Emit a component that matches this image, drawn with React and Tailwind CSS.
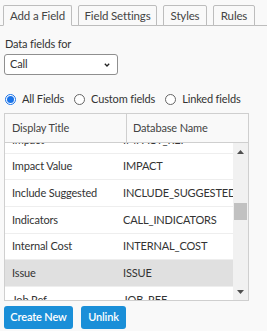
import React from 'react';

const TABS = [
  { label: 'Add a Field', w: 'w-[69px]', active: true },
  { label: 'Field Settings', w: 'w-[79px]' },
  { label: 'Styles', w: 'w-[44px]' },
  { label: 'Rules', w: 'w-[42px]' },
];

const ROWS = [
  ['Impact', 'IMPACT_REF'],
  ['Impact Value', 'IMPACT'],
  ['Include Suggested', 'INCLUDE_SUGGESTED'],
  ['Indicators', 'CALL_INDICATORS'],
  ['Internal Cost', 'INTERNAL_COST'],
  ['Issue', 'ISSUE', true],
  ['Job Ref', 'JOB_REF'],
];

function Radio({ checked, label }) {
  return (
    <label className="flex items-center gap-[6px]">
      <span
        className={`w-[11px] h-[11px] rounded-full border flex items-center justify-center bg-white ${
          checked ? 'border-[#1a73e8]' : 'border-[#666]'
        }`}
      >
        {checked && <span className="w-[7px] h-[7px] rounded-full bg-[#1a73e8]"></span>}
      </span>
      <span>{label}</span>
    </label>
  );
}

export default function App() {
  return (
    <div className="w-[267px] h-[331px] overflow-hidden bg-[#f9f9f9] text-[#333] text-[11px] tracking-[-0.15px] font-['Lato','Open_Sans',sans-serif]">
      {/* tabs */}
      <div className="flex items-end gap-[6px] pt-[5px] pl-[3px] border-b border-[#bdbdbd] h-[26px]">
        {TABS.map(t => (
          <div
            key={t.label}
            className={`${t.w} h-[21px] -mb-px flex items-center justify-center border border-[#bdbdbd] rounded-t-[2px] text-[11.5px] text-[#444] ${
              t.active ? 'border-b-[#f9f9f9] bg-[#f9f9f9]' : 'bg-[#f9f9f9]'
            }`}
          >
            {t.label}
          </div>
        ))}
      </div>

      <div className="px-[4px]">
        <div className="mt-[11px] pl-[1px] leading-[14px]">Data fields for</div>

        <div className="mt-[3px] w-[114px] h-[21px] bg-white border border-[#8f8f8f] rounded-[3px] flex items-center justify-between pl-[5px] pr-[7px]">
          <span>Call</span>
          <svg width="6" height="4" viewBox="0 0 6 4">
            <path d="M0.8 0.8 L3 3 L5.2 0.8" fill="none" stroke="#222" strokeWidth="1.3" />
          </svg>
        </div>

        <div className="mt-[18px] flex items-center gap-[10px] pl-[1px] h-[12px]">
          <Radio checked label="All Fields" />
          <Radio label="Custom fields" />
          <Radio label="Linked fields" />
        </div>

        {/* table */}
        <div className="mt-[8px] w-[245px] border border-[#cfcfcf] bg-white">
          <div className="flex h-[29px] border-b border-[#cfcfcf] bg-[#f9f9f9] text-[#444]">
            <div className="w-[122px] border-r border-[#cfcfcf] flex items-center pl-[7px]">Display Title</div>
            <div className="flex-1 flex items-center pl-[6px]">Database Name</div>
          </div>
          <div className="flex h-[157px]">
            <div className="flex-1 overflow-hidden">
              <div className="-mt-[16px]">
                {ROWS.map(([a, b, sel]) => (
                  <div
                    key={a}
                    className={`flex h-[26.67px] items-center border-b border-[#eeeeee] ${sel ? 'bg-[#e0e0e0]' : ''}`}
                  >
                    <div className="w-[110px] pl-[7px] whitespace-nowrap overflow-hidden">{a}</div>
                    <div className="flex-1 pl-[8px] whitespace-nowrap overflow-hidden">{b}</div>
                  </div>
                ))}
              </div>
            </div>
            {/* scrollbar */}
            <div className="w-[15px] bg-[#f1f1f1] flex flex-col items-center">
              <div className="h-[15px] flex items-center justify-center mt-[1px]">
                <svg width="7" height="4" viewBox="0 0 7 4"><path d="M0 4 L3.5 0 L7 4 Z" fill="#505050" /></svg>
              </div>
              <div className="mt-[44px] w-[13px] h-[17px] bg-[#c1c1c1]"></div>
              <div className="flex-1"></div>
              <div className="h-[15px] flex items-center justify-center mb-[1px]">
                <svg width="7" height="4" viewBox="0 0 7 4"><path d="M0 0 L3.5 4 L7 0 Z" fill="#505050" /></svg>
              </div>
            </div>
          </div>
        </div>

        <div className="mt-[5px] flex gap-[8px]">
          <button className="w-[69px] h-[23px] rounded-[3px] bg-[#1a8fd8] text-white font-semibold">Create New</button>
          <button className="w-[45px] h-[23px] rounded-[3px] bg-[#1a8fd8] text-white font-semibold">Unlink</button>
        </div>
        <div className="mt-[3px] w-[245px] border-t border-[#cfcfcf]"></div>
      </div>
    </div>
  );
}
